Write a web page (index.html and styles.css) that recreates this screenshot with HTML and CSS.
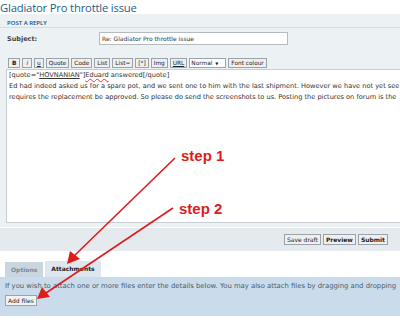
FILE: index.html
```html
<!DOCTYPE html>
<html lang="en">
<head>
    <meta charset="UTF-8">
    <title>Gladiator Pro throttle issue</title>
    <link rel="stylesheet" href="styles.css">
</head>
<body>
    <h2 class="topic-title">Gladiator Pro throttle issue</h2>

    <div class="panel">
        <h3 class="panel-head">POST A REPLY</h3>
        <div class="subject-row">
            <label>Subject:</label>
            <div class="input">Re: Gladiator Pro throttle issue</div>
        </div>
        <div class="toolbar">
            <span class="btn b">B</span>
            <span class="btn i">i</span>
            <span class="btn u">u</span>
            <span class="btn">Quote</span>
            <span class="btn">Code</span>
            <span class="btn">List</span>
            <span class="btn">List=</span>
            <span class="btn">[*]</span>
            <span class="btn">Img</span>
            <span class="btn u">URL</span>
            <span class="select">Normal <span class="caret">&#9660;</span></span>
            <span class="btn">Font colour</span>
        </div>
        <div class="editor">
            <p>[quote="<span class="ul">HOVNANIAN</span>"]<span class="spell">Eduard</span> answered[/quote]</p>
            <p>Ed had indeed asked us for a spare pot, and we sent one to him with the last shipment. However we have not yet see</p>
            <p>requires the replacement be approved. So please do send the screenshots to us. Posting the pictures on forum is the</p>
        </div>
    </div>

    <div class="submit-bar">
        <span class="btn big">Save draft</span>
        <span class="btn big strong">Preview</span>
        <span class="btn big strong">Submit</span>
    </div>

    <div class="tabs">
        <span class="tab">Options</span>
        <span class="tab active">Attachments</span>
    </div>
    <div class="attach">
        <p>If you wish to attach one or more files enter the details below. You may also attach files by dragging and dropping</p>
        <span class="btn big">Add files</span>
    </div>

    <!-- red annotations drawn over the screenshot -->
    <svg class="notes" width="400" height="322" viewBox="0 0 400 322">
        <g stroke="#dd1c1c" stroke-width="1.6" fill="none">
            <line x1="175" y1="158" x2="74" y2="256"/>
            <line x1="173" y1="208" x2="46" y2="293"/>
        </g>
        <g fill="#dd1c1c">
            <polygon points="67,264 70,251 80,259"/>
            <polygon points="37,299 42,287 50,297"/>
        </g>
        <text x="181" y="161" class="step">step 1</text>
        <text x="179" y="214" class="step">step 2</text>
    </svg>
</body>
</html>
```

FILE: styles.css
```css
body {
    margin: 0;
    width: 400px;
    height: 322px;
    overflow: hidden;
    position: relative;
    background: #fff;
    font-family: "DejaVu Sans", Verdana, sans-serif;
    font-size: 6.5px;
    color: #333;
}

p {
    margin: 0;
}

.topic-title {
    margin: 0;
    height: 14px;
    padding-top: 1px;
    box-sizing: border-box;
    line-height: 13px;
    font-family: "Open Sans", sans-serif;
    font-weight: normal;
    font-size: 11.3px;
    color: #1e5f86;
    letter-spacing: -0.2px;
    overflow: visible;
}

.panel {
    background: #ecf1f3;
    height: 213px;
    padding: 0 0 0 6px;
}

.panel-head {
    margin: 0 0 0 -6px;
    padding: 5px 0 0 7px;
    height: 8px;
    border-bottom: 1px solid #d5dde2;
    font-family: "Open Sans", sans-serif;
    font-size: 6px;
    font-weight: 600;
    color: #115088;
}

.subject-row {
    display: flex;
    align-items: center;
    margin-top: 4px;
    height: 13px;
}

.subject-row label {
    width: 92px;
    padding-left: 1px;
    font-weight: bold;
    font-size: 6.5px;
    color: #444;
}

.input {
    width: 185px;
    height: 11px;
    line-height: 11px;
    padding-left: 2px;
    background: #fff;
    border: 1px solid #b4bac0;
    font-size: 6px;
    color: #333;
}

.toolbar {
    display: flex;
    gap: 2px;
    margin: 13px 0 0 2px;
    height: 10px;
}

.btn {
    display: inline-block;
    height: 8px;
    line-height: 8px;
    padding: 0 2px;
    background: #efefef;
    border: 1px solid #9aa3a9;
    font-size: 5.8px;
    color: #222;
}

.btn.b { font-weight: bold; padding: 0 3px; }
.btn.i { font-style: italic; padding: 0 3px; }
.btn.u { text-decoration: underline; }

.select {
    display: inline-block;
    height: 8px;
    line-height: 8px;
    width: 33px;
    padding: 0 1px;
    background: #fff;
    border: 1px solid #9aa3a9;
    font-size: 5.8px;
    color: #222;
}

.caret {
    font-size: 4px;
    margin-left: 1px;
}

.editor {
    margin-top: 1px;
    height: 152px;
    width: 410px;
    padding: 0 2px;
    background: #fff;
    border: 1px solid #c7cdd2;
    white-space: nowrap;
    overflow: hidden;
    line-height: 11px;
    font-size: 6.62px;
    color: #333;
}

.ul {
    text-decoration: underline;
}

.spell {
    text-decoration: underline wavy #e33;
}

.submit-bar {
    display: flex;
    justify-content: flex-end;
    align-items: center;
    gap: 2px;
    margin-top: 1px;
    height: 23px;
    padding-right: 12px;
    background: #e4eaee;
}

.btn.big {
    height: 9px;
    line-height: 9px;
    font-size: 6px;
}

.btn.strong {
    font-weight: bold;
}

.tabs {
    display: flex;
    align-items: flex-end;
    gap: 2px;
    margin-top: 9px;
    height: 17px;
    padding-left: 5px;
}

.tab {
    height: 15px;
    line-height: 15px;
    padding: 0 6px;
    background: #c9d6e0;
    font-family: "DejaVu Sans", sans-serif;
    font-size: 6px;
    font-weight: bold;
    color: #7b8a96;
}

.tab.active {
    height: 16px;
    line-height: 16px;
    background: #dfe7ee;
    color: #222;
}

.attach {
    background: #cadceb;
    height: 39px;
    padding: 5px 0 0 5px;
    box-sizing: border-box;
    white-space: nowrap;
    overflow: hidden;
    font-size: 6.85px;
    color: #4a5b68;
}

.attach .btn {
    margin-top: 5px;
    background: #f2f2f2;
}

.notes {
    position: absolute;
    left: 0;
    top: 0;
}

.step {
    font-family: "Liberation Sans", Arial, sans-serif;
    font-weight: bold;
    font-size: 15px;
    fill: #dd1c1c;
}
```
